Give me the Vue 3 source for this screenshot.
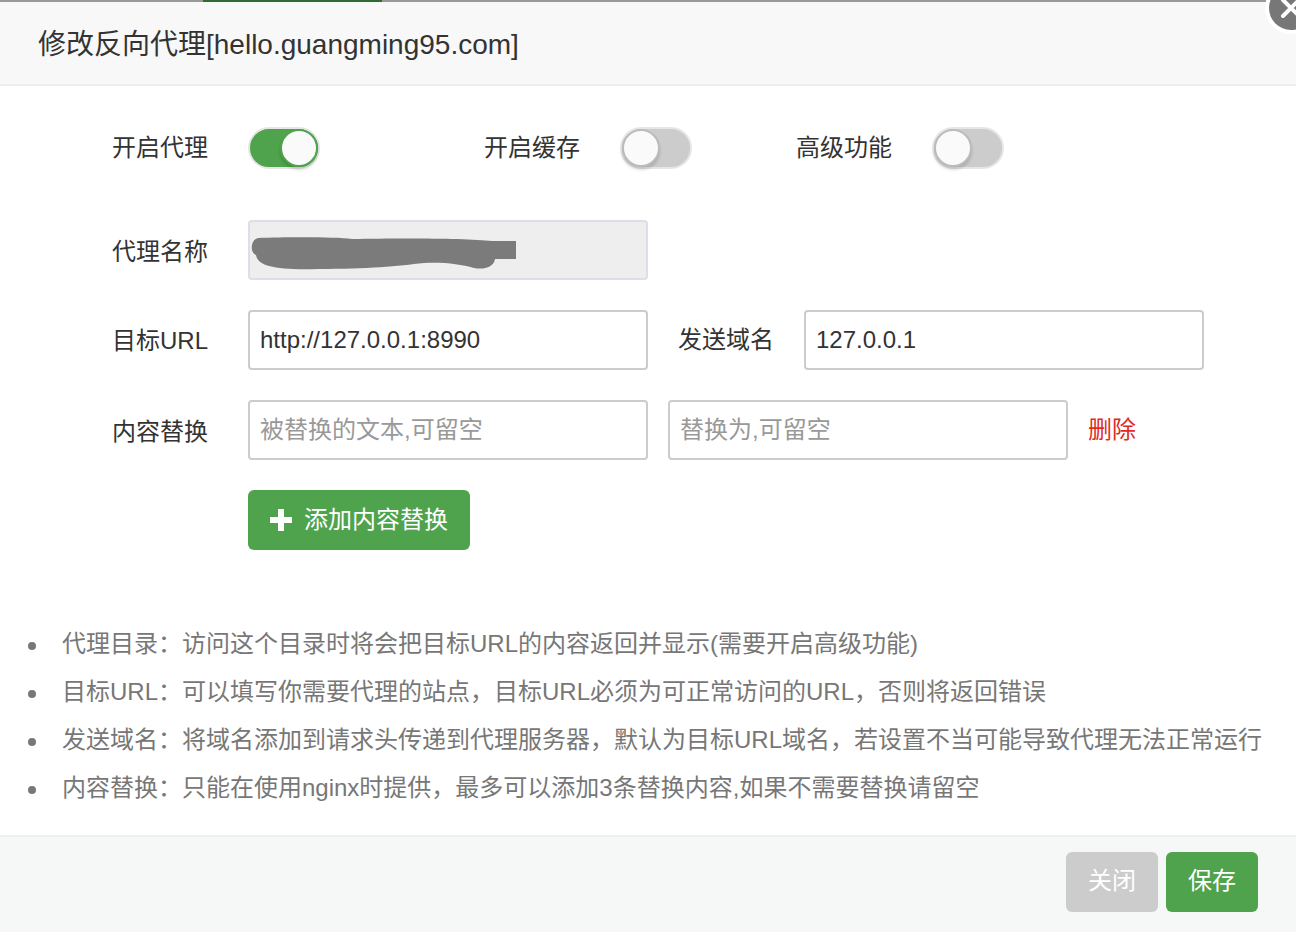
<script setup>
const c = '\uFF1A'
const m = '\uFF0C'
const hints = [
  `代理目录${c}访问这个目录时将会把目标URL的内容返回并显示(需要开启高级功能)`,
  `目标URL${c}可以填写你需要代理的站点${m}目标URL必须为可正常访问的URL${m}否则将返回错误`,
  `发送域名${c}将域名添加到请求头传递到代理服务器${m}默认为目标URL域名${m}若设置不当可能导致代理无法正常运行`,
  `内容替换${c}只能在使用nginx时提供${m}最多可以添加3条替换内容,如果不需要替换请留空`
]
</script>

<template>
  <div class="modal">
    <div class="topbar"><span class="topbar-green"></span></div>
    <button class="close" aria-label="关闭">
      <svg width="44" height="44" viewBox="0 0 44 44"><path d="M14 14 L30 30 M30 14 L14 30" stroke="#fff" stroke-width="4" stroke-linecap="round"/></svg>
    </button>
    <header class="head">修改反向代理[hello.guangming95.com]</header>

    <main class="body">
      <div class="form">
        <div class="switches">
          <div class="sw-group first">
            <span class="label">开启代理</span>
            <span class="toggle on"><i></i></span>
          </div>
          <div class="sw-group second">
            <span class="label">开启缓存</span>
            <span class="toggle"><i></i></span>
          </div>
          <div class="sw-group">
            <span class="label">高级功能</span>
            <span class="toggle"><i></i></span>
          </div>
        </div>

        <div class="row">
          <span class="label low">代理名称</span>
          <div class="redacted">
            <input class="input" disabled />
            <svg class="scribble" width="270" height="36" viewBox="0 0 270 36">
              <path fill="#7b7b7b" d="M10 1 C40 0 90 0 104 2 C150 1 220 1 244 4 L268 4 L268 22 L247 22 C246 30 236 33 226 31 C212 27 196 25 176 26 C150 29 120 32 70 32 C30 33 10 30 8 18 C2 16 2 3 10 1 Z"/>
            </svg>
          </div>
        </div>

        <div class="row">
          <span class="label mid">目标URL</span>
          <input class="input" value="http://127.0.0.1:8990" />
          <span class="label second-label">发送域名</span>
          <input class="input" value="127.0.0.1" />
        </div>

        <div class="row">
          <span class="label low">内容替换</span>
          <input class="input" placeholder="被替换的文本,可留空" />
          <input class="input replace" placeholder="替换为,可留空" />
          <a class="del">删除</a>
        </div>

        <div class="row add-row">
          <button class="btn add">
            <svg width="22" height="22" viewBox="0 0 22 22"><path fill="#fff" d="M8 0 H14 V8 H22 V14 H14 V22 H8 V14 H0 V8 H8 Z"/></svg>
            <span>添加内容替换</span>
          </button>
        </div>
      </div>

      <ul class="hints">
        <li v-for="h in hints" :key="h">{{ h }}</li>
      </ul>
    </main>

    <footer class="foot">
      <button class="btn gray">关闭</button>
      <button class="btn green">保存</button>
    </footer>
  </div>
</template>

<style>
html, body { margin: 0; background: #fff; overflow: hidden; }
</style>

<style scoped>
.modal {
  position: relative;
  width: 1296px;
  height: 932px;
  display: flex;
  flex-direction: column;
  overflow: hidden;
  font-family: "Liberation Sans", "Noto Sans CJK SC", sans-serif;
  color: #333;
}
.topbar { height: 2px; background: #999; flex: none; padding-left: 203px; }
.topbar-green { display: block; width: 179px; height: 2px; background: #2f6b2f; }
.close {
  position: absolute;
  top: -14px;
  right: -17px;
  width: 44px;
  height: 44px;
  padding: 0;
  border: 0;
  border-radius: 50%;
  background: #777;
  box-shadow: 0 0 0 4px #fff;
}
.close svg { display: block; }
.head {
  height: 82px;
  flex: none;
  line-height: 86px;
  padding-left: 38px;
  font-size: 28px;
  background: #f8f8f8;
  border-bottom: 2px solid #eee;
}
.body { flex: 1; background: #fff; }
.form { padding: 40px 0 0 112px; }
.switches { display: flex; height: 44px; margin-bottom: 50px; }
.sw-group { display: flex; align-items: center; }
.sw-group.first { margin-right: 164px; }
.sw-group.second { margin-right: 104px; }
.label { width: 96px; flex: none; font-size: 24px; line-height: 34px; white-space: nowrap; color: #333; }
.label.low { padding-top: 4px; }
.label.mid { padding-top: 2px; }
.toggle {
  position: relative;
  width: 68px;
  height: 38px;
  margin-left: 40px;
  border: 2px solid #e6e6e6;
  border-radius: 21px;
  background: #ccc;
  display: block;
}
.toggle i {
  position: absolute;
  left: 0;
  top: 0;
  width: 38px;
  height: 38px;
  box-sizing: border-box;
  border-radius: 50%;
  background: #fafafa;
  border: 2px solid #bbb;
  box-shadow: 0 3px 3px rgba(0, 0, 0, 0.15);
}
.toggle.on { background: #4fa34c; }
.toggle.on i { left: 30px; border-color: #4fa34c; }
.row { display: flex; align-items: center; height: 60px; margin-bottom: 30px; }
.row .label + * { margin-left: 40px; }
.input {
  display: block;
  width: 400px;
  height: 60px;
  box-sizing: border-box;
  padding: 0 10px;
  border: 2px solid #ccc;
  border-radius: 4px;
  background: #fff;
  font: 24px "Liberation Sans", "Noto Sans CJK SC", sans-serif;
  color: #333;
  outline: none;
  flex: none;
}
.input::placeholder { color: #999; opacity: 1; }
.input:disabled { background: #eee; border-color: #dedeea; }
.redacted { position: relative; width: 400px; height: 60px; flex: none; }
.scribble { position: absolute; left: 0; top: 17px; }
.row .second-label { margin-left: 30px; }
.row .second-label + .input { margin-left: 30px; }
.replace { margin-left: 20px; }
.del { margin-left: 20px; font-size: 24px; line-height: 34px; color: #e22b1e; }
.btn {
  height: 60px;
  box-sizing: border-box;
  border: 0;
  border-radius: 6px;
  font: 24px/34px "Liberation Sans", "Noto Sans CJK SC", sans-serif;
  color: #fff;
  padding: 0 0 3px;
}
.add-row { margin-left: 136px; margin-bottom: 0; }
.add {
  width: 222px;
  background: #4fa34c;
  display: flex;
  align-items: center;
  padding: 0 0 1px 22px;
  gap: 12px;
}
.add svg { margin-top: 1px; }
.hints {
  margin: 70px 0 0;
  padding: 0 0 0 28px;
  list-style: none;
  color: #777;
  font-size: 24px;
  line-height: 48px;
  white-space: nowrap;
}
.hints li { display: flex; align-items: center; }
.hints li::before {
  content: "";
  width: 8px;
  height: 8px;
  margin: 4px 26px 0 0;
  border-radius: 50%;
  background: #777;
  flex: none;
}
.foot {
  height: 97px;
  box-sizing: border-box;
  flex: none;
  background: #f6f8f8;
  border-top: 2px solid #eef0f0;
  display: flex;
  justify-content: flex-end;
  align-items: flex-start;
  gap: 8px;
  padding: 15px 38px 0 0;
}
.gray, .green { width: 92px; }
.gray { background: #ccc; }
.green { background: #4fa34c; }
</style>
